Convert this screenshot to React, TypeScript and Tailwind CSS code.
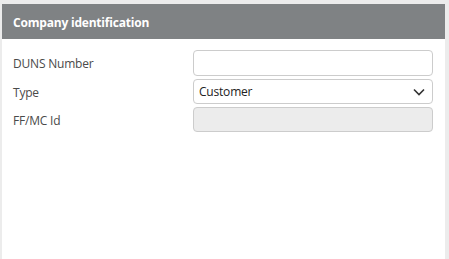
import React from 'react';

const font = { fontFamily: '"Open Sans", "Noto Sans", Arial, sans-serif' };

const rows = [
  { label: 'DUNS Number', kind: 'text' },
  { label: 'Type', kind: 'select' },
  { label: 'FF/MC Id', kind: 'disabled' },
];

export default function App() {
  return (
    <div className="w-[449px] h-[259px] bg-[#ececec] pt-1 pl-[2px] pr-1 overflow-hidden" style={font}>
      <div className="h-full bg-white flex flex-col">
        <div className="h-[35px] bg-[#7f8284] flex items-center px-[11px] pt-[3px]">
          <span className="text-white text-[12px] font-bold tracking-[-0.2px]">Company identification</span>
        </div>
        <div className="flex flex-col gap-[3px] pt-[11px] pl-[11px] pr-[12px]">
          {rows.map((row) => (
            <div key={row.label} className="flex items-center">
              <label className="w-[180px] pt-[2px] text-[12px] text-[#4a4a4a] tracking-[-0.2px]">{row.label}</label>
              {row.kind === 'text' && (
                <input
                  type="text"
                  className="flex-1 h-[26px] border border-[#cccccc] rounded-[4px] bg-white outline-none px-[5px] text-[12px]"
                />
              )}
              {row.kind === 'select' && (
                <div className="flex-1 h-[25px] border border-[#cccccc] rounded-[4px] bg-white flex items-center justify-between pl-[5px] pr-[7px]">
                  <span className="text-[12px] text-[#222] tracking-[-0.2px]">Customer</span>
                  <svg width="12" height="8" viewBox="0 0 12 8" fill="none">
                    <path d="M1 1.5 L6 6.5 L11 1.5" stroke="#333" strokeWidth="1.6" />
                  </svg>
                </div>
              )}
              {row.kind === 'disabled' && (
                <div className="flex-1 h-[25px] border border-[#cccccc] rounded-[4px] bg-[#ececec]" />
              )}
            </div>
          ))}
        </div>
      </div>
    </div>
  );
}
